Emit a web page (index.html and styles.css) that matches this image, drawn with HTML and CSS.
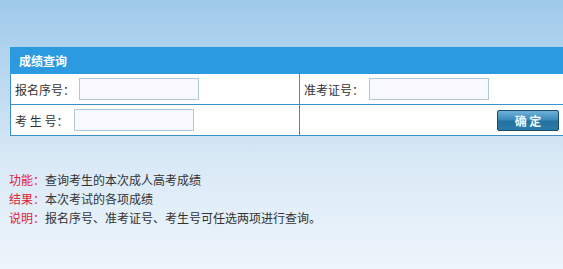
FILE: index.html
```html
<!DOCTYPE html>
<html lang="zh-CN">
<head>
  <meta charset="UTF-8">
  <title>成绩查询</title>
  <link rel="stylesheet" href="styles.css">
</head>
<body>

  <table class="query-table">
    <tr>
      <th colspan="2">成绩查询</th>
    </tr>
    <tr>
      <td class="col-left"><span class="label label-wide">报名序号：</span><input type="text" class="field"></td>
      <td><span class="label label-right">准考证号：</span><input type="text" class="field"></td>
    </tr>
    <tr>
      <td class="col-left"><span class="label">考 生 号：</span><input type="text" class="field"></td>
      <td class="btn-cell"><button class="submit-btn">确 定</button></td>
    </tr>
  </table>

  <div class="notes">
    <p><span class="tag">功能：</span>查询考生的本次成人高考成绩</p>
    <p><span class="tag">结果：</span>本次考试的各项成绩</p>
    <p><span class="tag">说明：</span>报名序号、准考证号、考生号可任选两项进行查询。</p>
  </div>

</body>
</html>
```

FILE: styles.css
```css
html, body {
  height: 100%;
}

body {
  margin: 0;
  overflow: hidden;
  font-family: "Noto Sans CJK SC", sans-serif;
  font-size: 12px;
  color: #333;
  background: linear-gradient(to bottom, #9fc9ea 0%, #b6d6ef 25%, #d9e9f6 60%, #eef5fb 100%);
}

.query-table {
  margin: 47px 0 0 10px;
  width: 580px;
  border-collapse: collapse;
  background-color: #fff;
}

.query-table th {
  height: 25px;
  padding: 0 0 0 8px;
  text-align: left;
  font-weight: bold;
  color: #fff;
  background-color: #2b9ae0;
  border: 1px solid #2b9ae0;
}

.query-table td {
  height: 30px;
  padding: 0 0 0 4px;
  border: 1px solid #3d8fcc;
  white-space: nowrap;
}

.col-left {
  width: 284px;
}

.label {
  display: inline-block;
  width: 59px;
  vertical-align: middle;
}

.label-wide {
  width: 64px;
}

.label-right {
  width: 65px;
}

.field {
  width: 118px;
  height: 20px;
  padding: 0;
  vertical-align: middle;
  border: 1px solid #b5c7d3;
  background-color: #f6f9ff;
}

.btn-cell {
  text-align: left;
  padding-left: 197px !important;
}

.submit-btn {
  width: 62px;
  height: 21px;
  padding: 0;
  font-family: inherit;
  font-size: 12px;
  font-weight: bold;
  color: #f4f8fb;
  border: 1px solid #1a4a66;
  border-radius: 2px;
  background: linear-gradient(to bottom, #6fb3d9 0%, #3a8cbc 45%, #24729f 55%, #2a7aa8 100%);
  cursor: pointer;
}

.notes {
  margin: 34px 0 0 9px;
}

.notes p {
  margin: 0;
  line-height: 19px;
}

.tag {
  color: #e0203a;
}
```
